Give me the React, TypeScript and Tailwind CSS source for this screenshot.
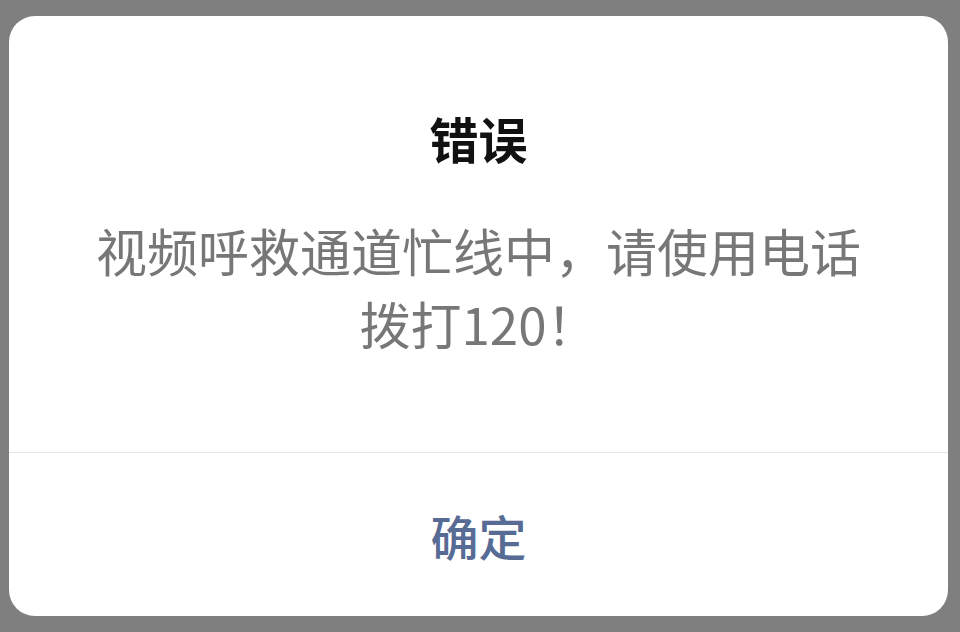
export default function App() {
  return (
    <div
      className="w-[960px] h-[632px] bg-[#7f7f7f] pt-[16px] pl-[9px]"
      style={{ fontFamily: '"Noto Sans CJK SC", "Noto Sans", sans-serif' }}
    >
      <div className="w-[939px] h-[600px] rounded-[26px] bg-white flex flex-col overflow-hidden">
        <div className="h-[436px] flex flex-col items-center pt-[92px]">
          <h2 className="text-[49px] leading-[60px] font-bold text-[#111111]">错误</h2>
          <p className="mt-[46px] text-[51px] leading-[73px] text-[#777777] text-center px-[40px]">
            视频呼救通道忙线中，请使用电话
            <br />
            拨打120！
          </p>
        </div>
        <div className="border-t border-[#e6e6e6]" />
        <button className="flex-1 flex items-center justify-center text-[48px] font-medium text-[#576b95]">
          确定
        </button>
      </div>
    </div>
  );
}
